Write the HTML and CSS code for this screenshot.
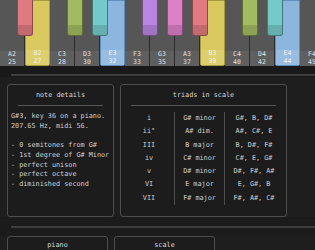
FILE: index.html
```html
<!DOCTYPE html>
<html>
<head>
<meta charset="utf-8">
<link rel="stylesheet" href="styles.css">
</head>
<body>
<div class="piano">
  <div class="white"><div class="black red"></div><span class="lbl"><b>A2</b><b>25</b></span></div>
  <div class="white hl yellow"><span class="lbl"><b>B2</b><b>27</b></span></div>
  <div class="white"><div class="black green"></div><span class="lbl"><b>C3</b><b>28</b></span></div>
  <div class="white"><div class="black cyan"></div><span class="lbl"><b>D3</b><b>30</b></span></div>
  <div class="white hl blue"><span class="lbl"><b>E3</b><b>32</b></span></div>
  <div class="white"><div class="black purple"></div><span class="lbl"><b>F3</b><b>33</b></span></div>
  <div class="white"><div class="black pink"></div><span class="lbl"><b>G3</b><b>35</b></span></div>
  <div class="white"><div class="black red"></div><span class="lbl"><b>A3</b><b>37</b></span></div>
  <div class="white hl yellow"><span class="lbl"><b>B3</b><b>39</b></span></div>
  <div class="white"><div class="black green"></div><span class="lbl"><b>C4</b><b>40</b></span></div>
  <div class="white"><div class="black cyan"></div><span class="lbl"><b>D4</b><b>42</b></span></div>
  <div class="white hl blue"><span class="lbl"><b>E4</b><b>44</b></span></div>
  <div class="white"><div class="black purple"></div><span class="lbl"><b>F4</b><b>45</b></span></div>
</div>
<div class="strip"><div class="thumb"></div></div>

<div class="row">
  <section class="panel details">
    <h2 class="title">note details</h2>
    <div class="rule"></div>
    <p class="line">G#3, key 36 on a piano.</p>
    <p class="line">207.65 Hz, midi 56.</p>
    <p class="line">&nbsp;</p>
    <p class="line">- 0 semitones from G#</p>
    <p class="line">- 1st degree of G# Minor</p>
    <p class="line">- perfect unison</p>
    <p class="line">- perfect octave</p>
    <p class="line">- diminished second</p>
  </section>
  <section class="panel triads">
    <h2 class="title">triads in scale</h2>
    <div class="rule"></div>
    <div class="table">
      <div class="col">
        <span>i</span><span>ii°</span><span>III</span><span>iv</span><span>v</span><span>VI</span><span>VII</span>
      </div>
      <div class="col sep">
        <span>G# minor</span><span>A# dim.</span><span>B major</span><span>C# minor</span><span>D# minor</span><span>E major</span><span>F# major</span>
      </div>
      <div class="col sep">
        <span>G#, B, D#</span><span>A#, C#, E</span><span>B, D#, F#</span><span>C#, E, G#</span><span>D#, F#, A#</span><span>E, G#, B</span><span>F#, A#, C#</span>
      </div>
    </div>
  </section>
</div>
<div class="strip strip2"><div class="thumb"></div></div>

<div class="row bottom">
  <section class="panel small"><h2 class="title">piano</h2></section>
  <section class="panel small"><h2 class="title">scale</h2></section>
</div>
</body>
</html>
```

FILE: styles.css
```css
* { box-sizing: border-box; margin: 0; padding: 0; }
html, body { width: 315px; height: 250px; overflow: hidden; }
body {
  background: #1e1e1e;
  color: #d0d0d0;
  font-family: "DejaVu Sans Mono", monospace;
  font-size: 6.8px;
  line-height: 9.7px;
}

.piano {
  display: flex;
  height: 66px;
  overflow: hidden;
  background: #1a1a1a;
}
.white {
  position: relative;
  flex: none;
  width: 25px;
  height: 66px;
  background: #565656;
  border-right: 1px solid #2c2c2c;
  display: flex;
  flex-direction: column;
  justify-content: flex-end;
}
.white.hl { border: 1px solid; border-radius: 0 0 2px 2px; }
.white.yellow { background: #dac95e; border-color: #a89a3e; }
.white.blue { background: #8db6de; border-color: #5e8ebf; }
.lbl {
  height: 15px;
  background: rgba(255, 255, 255, 0.06);
  display: flex;
  flex-direction: column;
  align-items: center;
  justify-content: center;
  font-size: 6.5px;
  line-height: 7.5px;
  color: #e0e0e0;
}
.hl .lbl { color: #f4f4f4; background: rgba(255, 255, 255, 0.1); }
.lbl b { font-weight: normal; }

.black {
  position: absolute;
  z-index: 1;
  top: 0;
  left: 17px;
  width: 16px;
  height: 36px;
  border: 1px solid rgba(0, 0, 0, 0.4);
  border-top: none;
  border-radius: 0 0 3px 3px;
}
.black::after {
  content: "";
  position: absolute;
  left: 0;
  right: 0;
  bottom: 0;
  height: 10px;
  border-radius: 0 0 2px 2px;
  background: rgba(0, 0, 0, 0.13);
}
.red { background: #e07a80; }
.green { background: #a2bb60; }
.cyan { background: #74c9c9; }
.purple { background: #b985e0; }
.pink { background: #dc80c8; }

.strip {
  height: 11px;
  background: #191919;
  padding: 8px 0 0 11px;
}
.thumb { height: 2px; background: #3e3e3e; }
.strip2 { height: 19px; padding-top: 9px; background: #1b1b1b; }

.row {
  display: flex;
  gap: 6px;
  padding: 7px 7px 0;
}
.panel {
  border: 1px solid #4d4d4d;
  border-radius: 3px;
  background: #1c1c1c;
  padding: 5px 3px 0;
}
.details { width: 107px; height: 133px; }
.triads { width: 167px; height: 133px; }
.title {
  font-size: 6.8px;
  font-weight: normal;
  line-height: 10px;
  text-align: center;
  color: #dadada;
}
.rule {
  height: 1px;
  background: #555;
  margin: 5px 7px 6px;
}
.line { white-space: pre; }

.table {
  display: grid;
  grid-template-columns: 50px 50px 1fr;
  margin-top: 0.5px;
}
.col {
  display: flex;
  flex-direction: column;
  align-items: center;
}
.col span { height: 13.3px; line-height: 13.3px; white-space: pre; }
.sep { border-left: 1px solid #4d4d4d; }

.bottom { padding-top: 0; }
.small { width: 101px; height: 30px; padding-top: 3px; }
```
